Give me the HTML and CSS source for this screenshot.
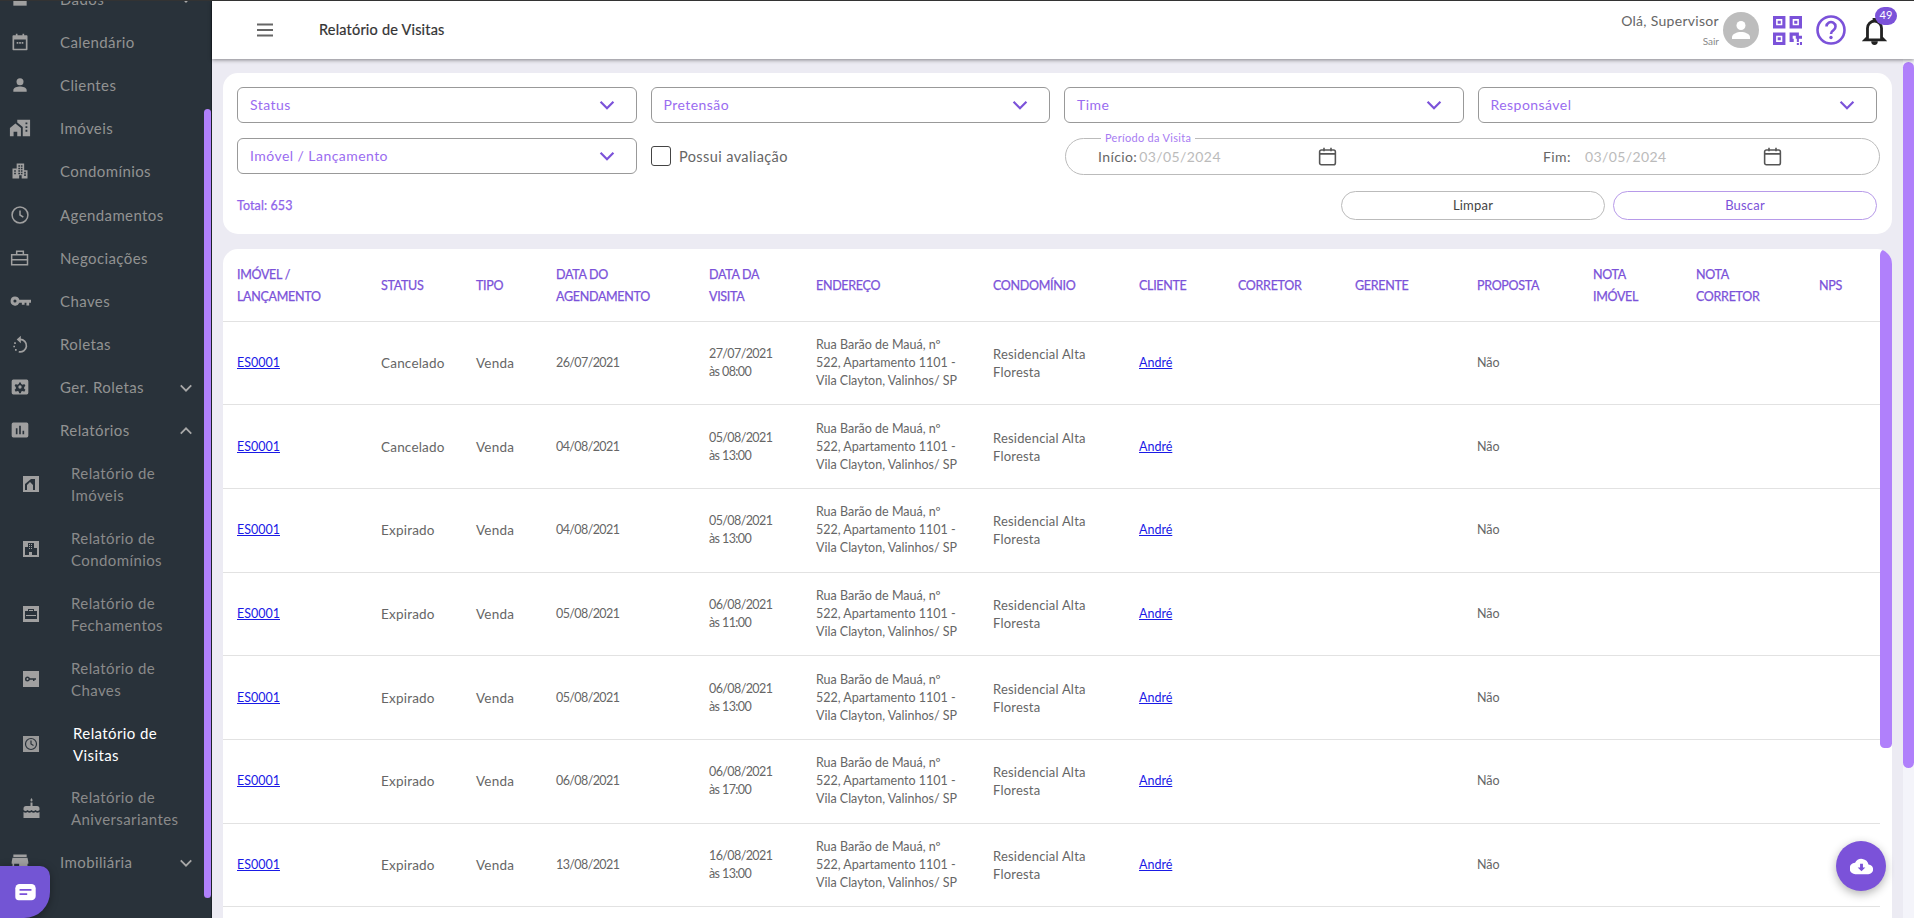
FILE: index.html
```html
<!DOCTYPE html>
<html lang="pt-BR">
<head>
<meta charset="utf-8">
<title>Relatório de Visitas</title>
<link rel="stylesheet" href="styles.css">
</head>
<body>
<svg class="defs" width="0" height="0">
  <defs>
    <symbol id="chev" viewBox="0 0 24 24"><path d="M5 8.500l7 7 7-7" fill="none" stroke="currentColor" stroke-width="2.400"/></symbol>
    <symbol id="cal" viewBox="0 0 24 24"><path d="M5 4.500h14a2 2 0 0 1 2 2v13a2 2 0 0 1-2 2H5a2 2 0 0 1-2-2v-13a2 2 0 0 1 2-2zM3 9h18M8 2v4M16 2v4" fill="none" stroke="currentColor" stroke-width="1.800"/></symbol>
  </defs>
</svg>
<aside class="sidebar">
  <nav class="nav">
    <a class="item"><svg class="ic" viewBox="0 0 24 24"><path fill="currentColor" d="M4 4h16v16H4z"/></svg><span class="lbl">Dados</span><svg class="arrow"><use href="#chev"/></svg></a>
    <a class="item"><svg class="ic" viewBox="0 0 24 24"><path fill="currentColor" d="M7 2h2v2h6V2h2v2h3a1 1 0 0 1 1 1v16a1 1 0 0 1-1 1H4a1 1 0 0 1-1-1V5a1 1 0 0 1 1-1h3zM5 9v11h14V9zM8 12h2v2H8zm3 0h2v2h-2zm3 0h2v2h-2z"/></svg><span class="lbl">Calendário</span></a>
    <a class="item"><svg class="ic" viewBox="0 0 24 24"><circle fill="currentColor" cx="12" cy="8" r="4.200"/><path fill="currentColor" d="M4 20v-2c0-2.800 5-4.200 8-4.200s8 1.400 8 4.200v2z"/></svg><span class="lbl">Clientes</span></a>
    <a class="item"><svg class="ic ic-wide" viewBox="0 0 24 24"><path fill="currentColor" d="M1 21v-9l6-5 6 5v9H9v-5H5v5zM9 3h14v18h-8V11l-6-5zM18 6v2h2V6zm0 4v2h2v-2zm0 4v2h2v-2z"/></svg><span class="lbl">Imóveis</span></a>
    <a class="item"><svg class="ic" viewBox="0 0 24 24"><path fill="currentColor" d="M8 3h9v8h4v10h-7v-4h-3v4H3V9h5zm2 2v2h2V5zm3 0v2h2V5zm-3 3v2h2V8zm3 0v2h2V8zm-3 3v2h2v-2zm3 0v2h2v-2zm4 2v2h2v-2zM5 11v2h2v-2zm0 3v2h2v-2zm5 0v2h2v-2zm3 0v2h2v-2zm4 2v2h2v-2z"/></svg><span class="lbl">Condomínios</span></a>
    <a class="item"><svg class="ic" viewBox="0 0 24 24"><circle cx="12" cy="12" r="9.500" fill="none" stroke="currentColor" stroke-width="1.800"/><path d="M12 6.500V12l4 2.600" fill="none" stroke="currentColor" stroke-width="1.800"/></svg><span class="lbl">Agendamentos</span></a>
    <a class="item"><svg class="ic" viewBox="0 0 24 24"><path fill="none" stroke="currentColor" stroke-width="1.800" d="M3 8h18a1 1 0 0 1 0 0v12H2V8zM8 8V4h8v4M2 14h20"/></svg><span class="lbl">Negociações</span></a>
    <a class="item"><svg class="ic ic-wide" viewBox="0 0 24 24"><path fill="currentColor" fill-rule="evenodd" d="M6.500 7a5 5 0 0 1 4.800 3.500H24V14h-2v3h-3v-3h-2v2h-3v-2h-2.700A5 5 0 1 1 6.500 7zm0 3.300a1.700 1.700 0 1 0 0 3.400 1.700 1.700 0 0 0 0-3.400z"/></svg><span class="lbl">Chaves</span></a>
    <a class="item"><svg class="ic" viewBox="0 0 24 24"><path fill="none" stroke="currentColor" stroke-width="2" d="M12 6.500a7.500 7.500 0 1 1-1.500 14.800"/><path fill="currentColor" d="M13 2v9L8 6.500zM5 10h2v2H5zM4 14h2v2H4zM6 18h2v2H6z"/></svg><span class="lbl">Roletas</span></a>
    <a class="item"><svg class="ic" viewBox="0 0 24 24"><path fill="currentColor" fill-rule="evenodd" d="M4 3h16a2 2 0 0 1 2 2v14a2 2 0 0 1-2 2H4a2 2 0 0 1-2-2V5a2 2 0 0 1 2-2zm7 3.500l-.5 2-1.800.8-1.800-1-1.400 2.300 1.500 1.400v2l-1.500 1.400 1.400 2.300 1.800-1 1.800.8.500 2h2l.5-2 1.800-.8 1.800 1 1.400-2.300-1.500-1.400v-2l1.500-1.400-1.400-2.300-1.800 1-1.800-.8-.5-2zm1 3.500a2 2 0 1 1 0 4 2 2 0 0 1 0-4z"/></svg><span class="lbl">Ger. Roletas</span><svg class="arrow"><use href="#chev"/></svg></a>
    <a class="item"><svg class="ic" viewBox="0 0 24 24"><path fill="currentColor" fill-rule="evenodd" d="M4 3h16a2 2 0 0 1 2 2v14a2 2 0 0 1-2 2H4a2 2 0 0 1-2-2V5a2 2 0 0 1 2-2zm3 7v7h2v-7zm4-3v10h2V7zm4 6v4h2v-4z"/></svg><span class="lbl">Relatórios</span><svg class="arrow up"><use href="#chev"/></svg></a>

    <a class="sub"><svg class="sic" viewBox="0 0 16 16"><path fill="currentColor" fill-rule="evenodd" d="M0 0h16v16H0zM2 14h2V9l3-3 3 3v5h2V3H8L2 8z"/></svg><span class="sl">Relatório de Imóveis</span></a>
    <a class="sub"><svg class="sic" viewBox="0 0 16 16"><path fill="currentColor" fill-rule="evenodd" d="M0 0h16v16H0zM5 2v4H2v8h4v-3h3v3h5V7h-3V2zm1 1h1v1H6zm2 0h1v1H8zM6 5h1v1H6zm2 0h1v1H8zM6 7h1v1H6zm2 0h1v1H8z"/></svg><span class="sl">Relatório de Condomínios</span></a>
    <a class="sub"><svg class="sic" viewBox="0 0 16 16"><path fill="currentColor" fill-rule="evenodd" d="M0 0h16v16H0zM5 5V3h6v2h3v8H2V5zm1 0h4V4H6zM3 9v1h10V9z"/></svg><span class="sl">Relatório de Fechamentos</span></a>
    <a class="sub"><svg class="sic" viewBox="0 0 16 16"><path fill="currentColor" fill-rule="evenodd" d="M0 0h16v16H0zM4.500 5.500a2.500 2.500 0 0 0 0 5 2.500 2.500 0 0 0 2.400-1.800H10V10h1.500V8.700H13V7.300H6.900a2.500 2.500 0 0 0-2.400-1.800zm0 1.500a1 1 0 1 1 0 2 1 1 0 0 1 0-2z"/></svg><span class="sl">Relatório de Chaves</span></a>
    <a class="sub active"><svg class="sic" viewBox="0 0 16 16"><path fill="#999" d="M0 0h16v16H0z"/><circle cx="8" cy="8" r="5.500" fill="none" stroke="#29323a" stroke-width="1.200"/><path d="M8 4.500V8l2.500 1.500" fill="none" stroke="#29323a" stroke-width="1.200"/></svg><span class="sl">Relatório de Visitas</span></a>
    <a class="sub"><svg class="sic cake" viewBox="0 0 17 20"><path fill="currentColor" d="M8.500 0c.8 1 1 1.800 1 2.500a1 1 0 0 1-2 0c0-.7.200-1.500 1-2.500zM7.500 4.500h2V8h-2zM3 8h11a2.500 2.500 0 0 1 2.500 2.500V12c-1.300 1.400-2.800 1.400-4 0-1.200 1.400-2.800 1.400-4 0-1.200 1.400-2.800 1.400-4 0-1.200 1.400-2.700 1.400-4 0v-1.500A2.500 2.500 0 0 1 3 8zM.5 14c1.300 1 2.700 1 4 0 1.200 1 2.800 1 4 0 1.200 1 2.800 1 4 0 1.300 1 2.700 1 4 0v6H.5z"/></svg><span class="sl">Relatório de Aniversariantes</span></a>
    <a class="item"><svg class="ic" viewBox="0 0 24 24"><path fill="currentColor" d="M4 3h16v3H4zM3 7h18l1 5v2h-1v7H3v-7H2v-2zm2 7v5h6v-5z"/></svg><span class="lbl">Imobiliária</span><svg class="arrow"><use href="#chev"/></svg></a>
  </nav>
  <div class="side-thumb"></div>
</aside>
<button class="chat" aria-label="Chat"><svg viewBox="0 0 24 20" width="21" height="17"><path fill="#fff" d="M5 0h14a5 5 0 0 1 5 5v9a5 5 0 0 1-5 5H4a4 4 0 0 1-4-4V5a5 5 0 0 1 5-5z"/><path d="M5 7h14M5 12h9" stroke="#7b52d9" stroke-width="2" fill="none"/></svg></button>

<div class="main">
  <header class="topbar">
    <svg class="burger" viewBox="0 0 24 24" width="24" height="24"><path d="M4 6.500h16M4 12h16M4 17.500h16" stroke="#666" stroke-width="1.800" fill="none"/></svg>
    <h1 class="title">Relatório de Visitas</h1>
    <div class="user">
      <div class="greet"><span class="hello">Olá, Supervisor</span><span class="exit">Sair</span></div>
      <div class="avatar"><svg viewBox="0 0 36 36" width="36" height="36"><circle cx="18" cy="13.500" r="4.500" fill="#fff"/><path fill="#fff" d="M9 27v-2c0-3 5-5 9-5s9 2 9 5v2z"/></svg></div>
      <svg class="qr" viewBox="0 0 28 28" width="29" height="29"><path fill="#7b52d9" fill-rule="evenodd" d="M0 0h12v12H0zm3 3v6h6V3zm1.500 1.500h3v3h-3zM16 0h12v12H16zm3 3v6h6V3zm1.500 1.500h3v3h-3zM0 16h12v12H0zm3 3v6h6v-6zm1.500 1.500h3v3h-3zM16 16h3v6h3v-3h-3v-3h6v3h3v3h-3v3h-2v-3h-3v3h-4zM23 26h2v2h-2zM26 25h2v3h-2z"/></svg>
      <svg class="help" viewBox="0 0 30 30" width="30" height="30"><circle cx="15" cy="15" r="13.500" fill="none" stroke="#7b52d9" stroke-width="2.600"/><path d="M10.500 11.500a4.500 4.500 0 1 1 6.800 3.900c-1.500.9-2.300 1.600-2.300 3.600" fill="none" stroke="#7b52d9" stroke-width="2.600"/><circle cx="15" cy="22.500" r="1.700" fill="#7b52d9"/></svg>
      <div class="bell">
        <svg viewBox="0 0 26 32" width="25" height="30"><path fill="none" stroke="#222" stroke-width="3" d="M5.500 23V13a7.500 7.500 0 0 1 15 0v10l2.500 2.500H3z"/><path fill="#222" d="M9.500 27h7a3.500 4 0 0 1-7 0zM11 2h4v3h-4z"/></svg>
        <span class="badge">49</span>
      </div>
    </div>
  </header>

  <div class="content">
    <section class="filters">
      <div class="grid-top">
        <div class="select"><span>Status</span><svg class="sel-chev"><use href="#chev"/></svg></div>
        <div class="select"><span>Pretensão</span><svg class="sel-chev"><use href="#chev"/></svg></div>
        <div class="select"><span>Time</span><svg class="sel-chev"><use href="#chev"/></svg></div>
        <div class="select"><span>Responsável</span><svg class="sel-chev"><use href="#chev"/></svg></div>
      </div>
      <div class="grid-mid">
        <div class="select"><span>Imóvel / Lançamento</span><svg class="sel-chev"><use href="#chev"/></svg></div>
        <label class="check"><span class="box"></span>Possui avaliação</label>
        <fieldset class="period">
          <legend>Período da Visita</legend>
          <div class="dt d1"><span><span class="dl">Início:</span><span class="dv">03/05/2024</span></span><svg class="cal"><use href="#cal"/></svg></div>
          <div class="dt d2"><span><span class="dl">Fim:</span><span class="dv">03/05/2024</span></span><svg class="cal"><use href="#cal"/></svg></div>
        </fieldset>
      </div>
      <div class="foot">
        <span class="total">Total: 653</span>
        <div class="btns"><button class="btn">Limpar</button><button class="btn primary">Buscar</button></div>
      </div>
    </section>

    <section class="table-card">
      <table class="tbl">
        <colgroup><col class="c1"><col class="c2"><col class="c3"><col class="c4"><col class="c5"><col class="c6"><col class="c7"><col class="c8"><col class="c9"><col class="c10"><col class="c11"><col class="c12"><col class="c13"><col class="c14"></colgroup>
        <thead>
          <tr><th>IMÓVEL / LANÇAMENTO</th><th>STATUS</th><th>TIPO</th><th>DATA DO AGENDAMENTO</th><th>DATA DA VISITA</th><th>ENDEREÇO</th><th>CONDOMÍNIO</th><th>CLIENTE</th><th>CORRETOR</th><th>GERENTE</th><th>PROPOSTA</th><th>NOTA IMÓVEL</th><th>NOTA CORRETOR</th><th>NPS</th></tr>
        </thead>
        <tbody>
          <tr><td><a href="#">ES0001</a></td><td>Cancelado</td><td>Venda</td><td>26/07/2021</td><td>27/07/2021 às 08:00</td><td>Rua Barão de Mauá, nº 522, Apartamento 1101 - Vila Clayton, Valinhos/ SP</td><td>Residencial Alta Floresta</td><td><a href="#">André</a></td><td></td><td></td><td>Não</td><td></td><td></td><td></td></tr>
          <tr><td><a href="#">ES0001</a></td><td>Cancelado</td><td>Venda</td><td>04/08/2021</td><td>05/08/2021 às 13:00</td><td>Rua Barão de Mauá, nº 522, Apartamento 1101 - Vila Clayton, Valinhos/ SP</td><td>Residencial Alta Floresta</td><td><a href="#">André</a></td><td></td><td></td><td>Não</td><td></td><td></td><td></td></tr>
          <tr><td><a href="#">ES0001</a></td><td>Expirado</td><td>Venda</td><td>04/08/2021</td><td>05/08/2021 às 13:00</td><td>Rua Barão de Mauá, nº 522, Apartamento 1101 - Vila Clayton, Valinhos/ SP</td><td>Residencial Alta Floresta</td><td><a href="#">André</a></td><td></td><td></td><td>Não</td><td></td><td></td><td></td></tr>
          <tr><td><a href="#">ES0001</a></td><td>Expirado</td><td>Venda</td><td>05/08/2021</td><td>06/08/2021 às 11:00</td><td>Rua Barão de Mauá, nº 522, Apartamento 1101 - Vila Clayton, Valinhos/ SP</td><td>Residencial Alta Floresta</td><td><a href="#">André</a></td><td></td><td></td><td>Não</td><td></td><td></td><td></td></tr>
          <tr><td><a href="#">ES0001</a></td><td>Expirado</td><td>Venda</td><td>05/08/2021</td><td>06/08/2021 às 13:00</td><td>Rua Barão de Mauá, nº 522, Apartamento 1101 - Vila Clayton, Valinhos/ SP</td><td>Residencial Alta Floresta</td><td><a href="#">André</a></td><td></td><td></td><td>Não</td><td></td><td></td><td></td></tr>
          <tr><td><a href="#">ES0001</a></td><td>Expirado</td><td>Venda</td><td>06/08/2021</td><td>06/08/2021 às 17:00</td><td>Rua Barão de Mauá, nº 522, Apartamento 1101 - Vila Clayton, Valinhos/ SP</td><td>Residencial Alta Floresta</td><td><a href="#">André</a></td><td></td><td></td><td>Não</td><td></td><td></td><td></td></tr>
          <tr><td><a href="#">ES0001</a></td><td>Expirado</td><td>Venda</td><td>13/08/2021</td><td>16/08/2021 às 13:00</td><td>Rua Barão de Mauá, nº 522, Apartamento 1101 - Vila Clayton, Valinhos/ SP</td><td>Residencial Alta Floresta</td><td><a href="#">André</a></td><td></td><td></td><td>Não</td><td></td><td></td><td></td></tr>
          <tr><td></td><td></td><td></td><td></td><td></td><td></td><td></td><td></td><td></td><td></td><td></td><td></td><td></td><td></td></tr>
        </tbody>
      </table>
      <div class="inner-thumb"></div>
    </section>
    <div class="outer-track"><div class="outer-thumb"></div></div>
  </div>
  <button class="fab" aria-label="Exportar"><svg viewBox="0 0 24 24" width="23" height="23"><path fill="#fff" d="M19.300 10a7.500 7.500 0 0 0-14-2A6 6 0 0 0 6 20h13a5 5 0 0 0 .3-10z"/><path fill="#7b52d9" d="M10.500 9h3v4H16l-4 4-4-4h2.500z"/></svg></button>
</div>
</body>
</html>
```
FILE: styles.css
```css
* { box-sizing: border-box; }
html, body { height: 100%; }
body {
  margin: 0;
  height: 918px;
  overflow: hidden;
  display: flex;
  font-family: "Lato", "Open Sans", sans-serif;
  color: #555;
  background: #ecebf3;
  border-top: 1px solid #333;
}
.defs { position: absolute; }

/* sidebar */
.sidebar { width: 212px; flex: none; background: #29323a; position: relative; overflow: hidden; border-right: 1px solid #1d2329; }
.nav { display: flex; flex-direction: column; margin-top: -24px; }
.item { display: flex; align-items: center; height: 43.200px; flex: none; color: #929292; font-size: 15px; letter-spacing: .4px; position: relative; padding-left: 10px; }
.ic { width: 20px; height: 20px; flex: none; color: #a0a0a0; }
.ic-wide { width: 22px; height: 22px; margin-left: -1px; margin-right: -1px; }
.lbl { margin-left: 30px; }
.arrow { position: absolute; left: 177px; top: 13px; width: 18px; height: 18px; color: #a8a8a8; }
.arrow.up { transform: rotate(180deg); }
.sub { display: flex; align-items: center; height: 64.800px; flex: none; color: #8a8a8a; font-size: 15px; letter-spacing: .4px; line-height: 22px; padding-left: 23px; }
.sic { width: 16px; height: 16px; flex: none; color: #a0a0a0; }
.sic.cake { width: 17px; height: 20px; margin-right: -1px; }
.sl { margin-left: 32px; width: 118px; }
.sub.active { color: #fff; }
.sub.active .sl { margin-left: 34px; }
.side-thumb { position: absolute; right: 0; top: 108px; bottom: 20px; width: 7px; border-radius: 4px; background: #b080fb; }
.chat {
  position: absolute; left: 0; top: 866px; width: 50px; height: 52px; border: 0; padding: 0;
  background: #7355d4; border-radius: 0 10px 26px 0;
  display: flex; align-items: center; justify-content: center; box-shadow: 0 2px 8px rgba(0,0,0,.35);
}

/* main */
.main { flex: 1; min-width: 0; position: relative; display: flex; flex-direction: column; }
.topbar {
  height: 58px; flex: none; background: #fff; display: flex; align-items: center;
  box-shadow: 0 1px 4px rgba(0,0,0,.45); position: relative; z-index: 2;
}
.burger { margin-left: 41px; }
.title { margin: 0 0 2px 42px; font-size: 14.500px; font-weight: 400; color: #333; letter-spacing: .2px; -webkit-text-stroke: .2px #333; }
.user { margin-left: auto; display: flex; align-items: center; padding-right: 27px; }
.greet { display: flex; flex-direction: column; align-items: flex-end; }
.hello { font-size: 14px; color: #666; letter-spacing: .3px; line-height: 20px; }
.exit { font-size: 10px; color: #888; line-height: 17px; margin-top: 2px; }
.avatar { width: 36px; height: 36px; border-radius: 50%; background: #bdbdbd; margin-left: 4px; }
.qr { margin-left: 14px; }
.help { margin-left: 14px; }
.bell { position: relative; margin-left: 16px; margin-top: 2px; width: 25px; height: 30px; }
.badge {
  position: absolute; left: 13px; top: -9px; width: 22px; height: 18px; border-radius: 10px;
  background: #7b52d9; color: #fff; font-size: 11px; text-align: center; line-height: 16px;
}

.content { flex: 1; position: relative; padding: 14px 22px 0 11px; min-height: 0; overflow: hidden; }
.outer-track { position: absolute; right: 0; top: 0; bottom: 0; width: 11px; background: #f4f4fa; }
.outer-thumb { margin-top: 3px; height: 706px; background: #b080fb; border-radius: 6px; }

/* filters */
.filters { background: #fff; border-radius: 15px; height: 161px; padding: 14px 15px 0 14px; }
.grid-top { display: grid; grid-template-columns: repeat(4, 1fr); column-gap: 14px; }
.grid-mid { display: grid; grid-template-columns: 400px 413px 1fr; column-gap: 14px; margin-top: 15px; }
.select {
  height: 36px; border: 1px solid #999; border-radius: 6px; display: flex; align-items: center; justify-content: space-between;
  padding: 0 18px 0 12px; color: #9a6cf0; font-size: 14px; letter-spacing: .45px; background: #fff;
}
.select span { margin-bottom: 2px; }
.sel-chev { width: 22px; height: 22px; color: #7b52d9; }
.check { display: flex; align-items: center; gap: 8px; font-size: 14.500px; color: #666; letter-spacing: .4px; margin-bottom: 1px; }
.box { width: 20px; height: 20px; border: 1px solid #444; border-radius: 3px; }
.period {
  margin: -6px 0 0 -13px; padding: 0 0 5px 32px; height: 43px; width: 815px; border: 1px solid #bbb; border-radius: 22px;
  display: flex; align-items: center;
}
.period legend { margin-left: 3px; padding: 0 4px; font-size: 11px; color: #a77cf2; letter-spacing: .3px; line-height: 12px; }
.dt { display: flex; align-items: center; justify-content: space-between; width: 240px; font-size: 14px; letter-spacing: .4px; }
.d1 { margin-right: 205px; }
.dl { color: #666; }
.dv { color: #bbb; margin-left: 2px; }
.d2 .dv { margin-left: 14px; }
.cal { width: 21px; height: 21px; color: #555; }
.foot { display: flex; justify-content: space-between; align-items: flex-start; margin-top: 16px; }
.total { font-size: 12.500px; color: #8f63ea; margin-top: 7px; letter-spacing: .1px; -webkit-text-stroke: .25px #8f63ea; }
.btns { display: flex; gap: 8px; }
.btn {
  width: 264px; height: 29px; border-radius: 15px; background: #fff; border: 1px solid #bbb;
  font-family: inherit; font-size: 13px; color: #444; letter-spacing: .2px; padding: 0 0 2px;
}
.btn.primary { border-color: #b79ae9; color: #7b52d9; }

/* table */
.table-card { background: #fff; border-radius: 15px 15px 0 0; margin-top: 15px; position: relative; overflow: hidden; width: 1669px; height: 700px; }
.tbl { width: 1657px; table-layout: fixed; border-collapse: collapse; }
.c1 { width: 144px; } .c2 { width: 95px; } .c3 { width: 80px; } .c4 { width: 153px; } .c5 { width: 107px; } .c6 { width: 177px; } .c7 { width: 146px; }
.c8 { width: 99px; } .c9 { width: 117px; } .c10 { width: 122px; } .c11 { width: 116px; } .c12 { width: 103px; } .c13 { width: 123px; } .c14 { width: 75px; }
th {
  height: 72px; text-align: left; font-weight: 400; font-size: 12.500px; letter-spacing: -.3px; line-height: 22px; color: #7b52d9; padding: 2px 14px 0;
  border-bottom: 1px solid #e2e2e2; -webkit-text-stroke: .25px #7b52d9;
}
td {
  height: 83.700px; font-size: 12.500px; line-height: 18px; color: #666; padding: 0 14px; border-bottom: 1px solid #e2e2e2; vertical-align: middle;
}
td:nth-child(2), td:nth-child(3) { font-size: 13.500px; letter-spacing: .2px; }
td:nth-child(4), td:nth-child(5) { font-size: 12.500px; letter-spacing: -.6px; }
td:nth-child(5) { padding-right: 24px; }
td:nth-child(6) { padding-right: 13px; }
td:nth-child(7) { font-size: 13px; letter-spacing: .2px; }
td a { color: #1a1ae6; text-decoration: underline; }
.inner-thumb { position: absolute; right: 0; top: 0; width: 12px; height: 499px; background: #b080fb; border-radius: 8px 8px 6px 6px; }

.fab {
  position: absolute; right: 28px; bottom: 27px; width: 50px; height: 50px; border: 0; border-radius: 50%; background: #7b52d9; padding: 0;
  display: flex; align-items: center; justify-content: center; box-shadow: 0 3px 10px rgba(0,0,0,.3); z-index: 3;
}
```
